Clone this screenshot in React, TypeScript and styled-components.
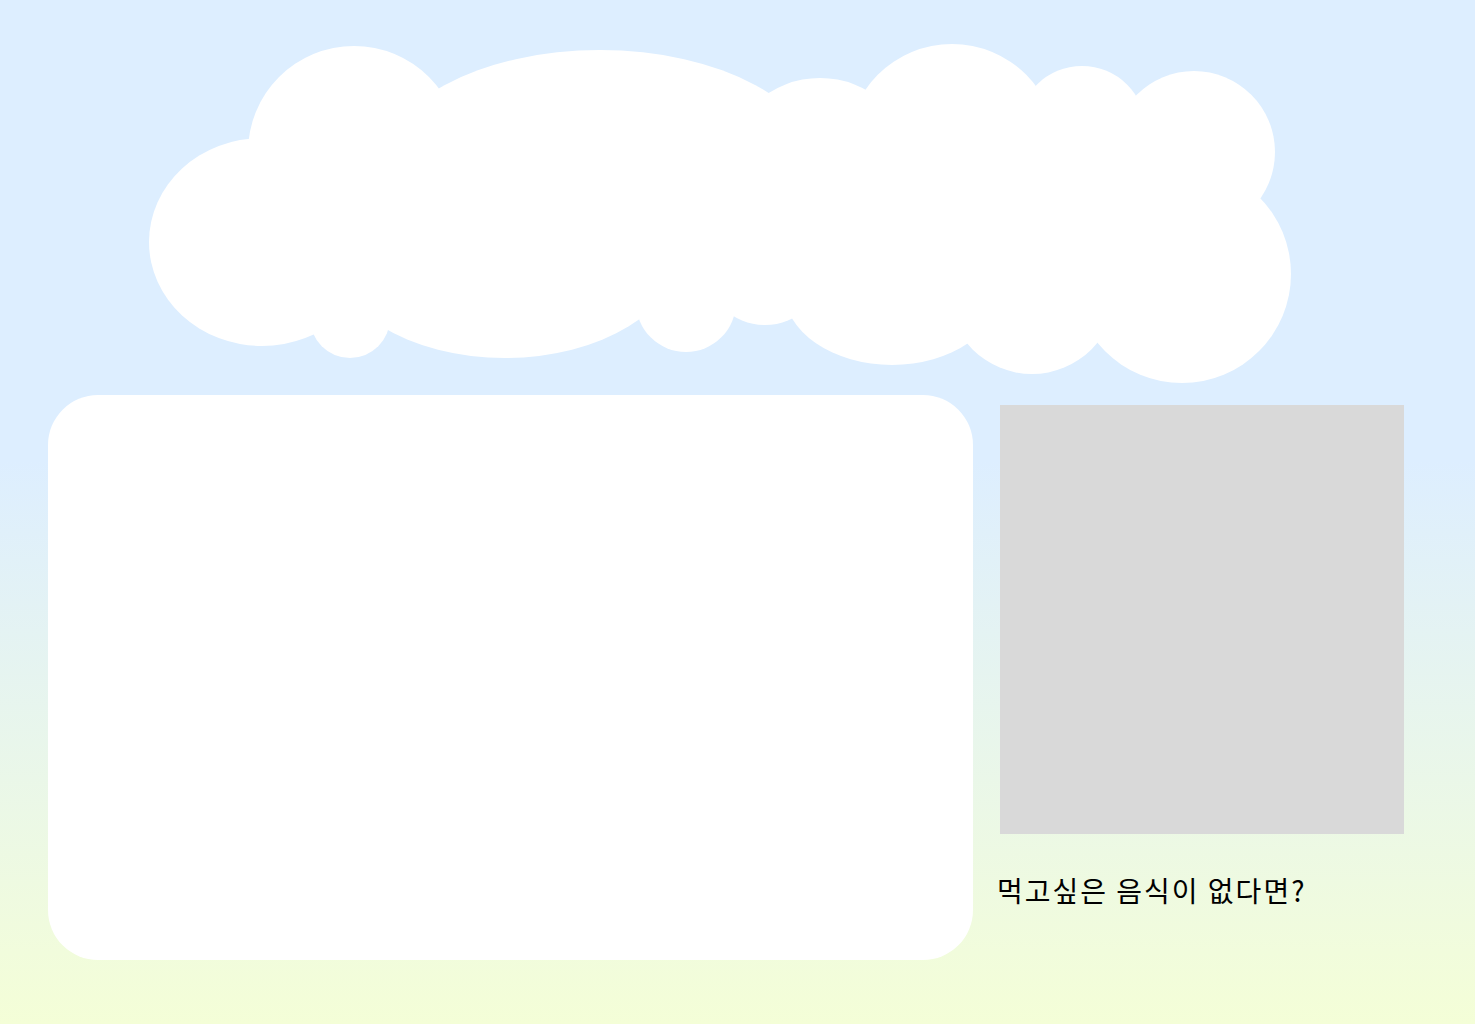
import React from "react";
import styled, { createGlobalStyle } from "styled-components";

const GlobalStyle = createGlobalStyle`
  html, body {
    margin: 0;
    padding: 0;
  }
  body {
    font-family: "Noto Sans CJK KR", "Noto Sans", sans-serif;
  }
`;

const Page = styled.div`
  width: 1475px;
  height: 1024px;
  overflow: hidden;
  background: linear-gradient(180deg, #ddeeff 0%, #ddeeff 45%, #f4fed7 100%);
  display: flex;
  flex-direction: column;
`;

const CloudArea = styled.header`
  height: 395px;
  flex: none;
`;

const CloudSvg = styled.svg`
  display: block;
  width: 1475px;
  height: 395px;
`;

const Content = styled.main`
  display: flex;
  align-items: flex-start;
  gap: 27px;
  padding-left: 48px;
`;

const Board = styled.section`
  width: 925px;
  height: 565px;
  background: #ffffff;
  border-radius: 50px;
  flex: none;
`;

const Side = styled.aside`
  display: flex;
  flex-direction: column;
  padding-top: 10px;
`;

const Thumb = styled.div`
  width: 404px;
  height: 429px;
  background: #d9d9d9;
`;

const Question = styled.p`
  margin: 36px 0 0 -3px;
  font-family: "Noto Sans CJK KR", "Noto Sans", sans-serif;
  font-size: 28px;
  font-weight: 400;
  line-height: 40px;
  color: #000000;
  letter-spacing: 2px;
`;

const Cloud = () => (
  <CloudSvg viewBox="0 0 1475 395" xmlns="http://www.w3.org/2000/svg">
    <g fill="#ffffff">
      <ellipse cx="262" cy="242" rx="113" ry="104" />
      <circle cx="354" cy="152" r="106" />
      <circle cx="350" cy="318" r="40" />
      <ellipse cx="600" cy="170" rx="220" ry="120" />
      <ellipse cx="505" cy="250" rx="175" ry="108" />
      <circle cx="686" cy="302" r="50" />
      <ellipse cx="820" cy="162" rx="90" ry="84" />
      <circle cx="765" cy="265" r="60" />
      <ellipse cx="892" cy="290" rx="108" ry="75" />
      <circle cx="1032" cy="290" r="84" />
      <circle cx="952" cy="149" r="105" />
      <circle cx="1082" cy="130" r="64" />
      <circle cx="1194" cy="152" r="81" />
      <circle cx="1182" cy="274" r="109" />
      <rect x="260" y="140" width="940" height="170" />
    </g>
  </CloudSvg>
);

export default function App() {
  return (
    <>
      <GlobalStyle />
      <Page>
        <CloudArea>
          <Cloud />
        </CloudArea>
        <Content>
          <Board />
          <Side>
            <Thumb />
            <Question>먹고싶은 음식이 없다면?</Question>
          </Side>
        </Content>
      </Page>
    </>
  );
}
